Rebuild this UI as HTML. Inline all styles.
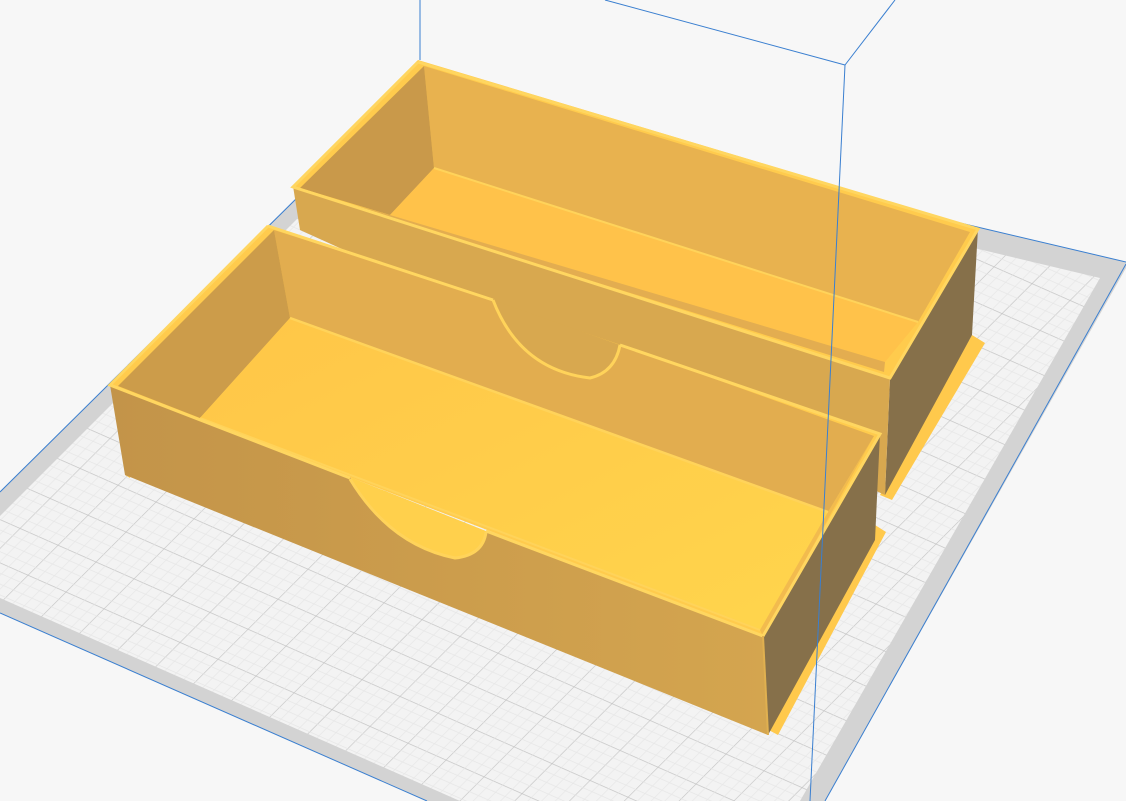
<!DOCTYPE html>
<html><head><meta charset="utf-8"><style>html,body{margin:0;padding:0;background:#f7f7f7;}svg{display:block}</style></head><body>
<svg width="1126" height="801" viewBox="0 0 1126 801" xmlns="http://www.w3.org/2000/svg">
<defs>
<pattern id="g" width="40" height="40" patternUnits="userSpaceOnUse" patternTransform="matrix(0.95,0.42,-0.75,0.75,0,0)">
<rect width="40" height="40" fill="#f3f3f3"/>
<path d="M0 0H40M0 0V40" stroke="#c4c4c4" stroke-width="1.3" fill="none"/>
<path d="M0 10H40M0 20H40M0 30H40M10 0V40M20 0V40M30 0V40" stroke="#e6e6e6" stroke-width="0.6" fill="none"/>
</pattern>
<linearGradient id="ff" x1="0" y1="0" x2="1" y2="0"><stop offset="0" stop-color="#c39449"/><stop offset="1" stop-color="#d4a54f"/></linearGradient>
<linearGradient id="fl" x1="0" y1="0" x2="1" y2="1"><stop offset="0" stop-color="#ffc648"/><stop offset="1" stop-color="#ffd54c"/></linearGradient>
</defs>
<rect width="1126" height="801" fill="#f7f7f7"/>
<polygon points="404,92 1126,262 1126,268 825,801 427,801 0,613 0,492" fill="#d3d3d3"/>
<polygon points="404,112 1100,278 800,801 460,801 0,598 0,516" fill="url(#g)"/>
<polyline points="0,492 404,92 1126,262" fill="none" stroke="#3a7fd0" stroke-width="1"/>
<line x1="1126" y1="264" x2="825" y2="801" stroke="#3a7fd0" stroke-width="1"/>
<line x1="0" y1="613" x2="427" y2="801" stroke="#3a7fd0" stroke-width="1"/>
<line x1="420" y1="0" x2="420" y2="60" stroke="#3a7fd0" stroke-width="1"/>
<line x1="605" y1="0" x2="845" y2="65" stroke="#3a7fd0" stroke-width="1"/>
<line x1="895" y1="0" x2="845" y2="65" stroke="#3a7fd0" stroke-width="1"/>

<!-- BACK BOX -->
<polygon points="972,335 985,343 892,500 880,495" fill="#ffc94c"/>
<polygon points="978,228 972,335 885,495 890,378" fill="#86704a"/>
<polygon points="293,186 890,378 885,495 300,230" fill="#d8a84f"/>
<polygon points="418,60 978,228 890,378 293,186" fill="#ffcb4d"/>
<polygon points="424,66 970,232 918,322 434,168" fill="#e8b24f"/>
<polygon points="424,66 434,168 390,215 300,188" fill="#c9994a"/>
<polygon points="434,168 918,322 885,362 390,215" fill="#ffc24a"/>
<polygon points="390,215 885,362 884,372 300,190" fill="#e3ad50"/>
<line x1="434" y1="168" x2="918" y2="322" stroke="#ffd35a" stroke-width="2"/>
<polyline points="418,62 978,229 890,378 293,187 418,62" fill="none" stroke="#ffd660" stroke-width="3"/>

<!-- FRONT BOX -->
<polygon points="875,525 886,532 778,735 765,728" fill="#ffc94c"/>
<polygon points="125,465 132,462 130,478 125,475" fill="#ffc94c"/>
<polygon points="880,433 875,540 768,735 763,636" fill="#86704a"/>
<polygon points="268,225 880,433 763,636 110,385" fill="#ffcb4d"/>
<path d="M274,230 L493,300 Q520,370 590,378 Q615,372 620,345 L874,436 828,512 290,318 Z" fill="#e2ad4f"/>
<path d="M493,300 Q520,370 590,378 Q615,372 620,345 Z" fill="#d8a84f"/>
<polygon points="274,230 290,318 200,418 118,386" fill="#cc9c4a"/>
<polygon points="290,318 828,512 760,630 200,418" fill="url(#fl)"/>
<polygon points="874,436 828,512 760,630 763,636" fill="#f2bb4e"/>
<line x1="290" y1="318" x2="828" y2="512" stroke="#ffd35a" stroke-width="2.5"/>
<line x1="200" y1="418" x2="760" y2="630" stroke="#ffd35a" stroke-width="2"/>
<!-- front outer face -->
<path d="M110,385 L350,477 Q390,545 455,558 Q483,555 486,531 L763,636 768,735 125,475 Z" fill="url(#ff)"/>
<path d="M350,477 Q390,545 455,558 Q483,555 486,531 Z" fill="#ffd04c"/>
<path d="M350,479 Q390,545 455,558 Q483,555 486,532" fill="none" stroke="#ffd35a" stroke-width="3"/>
<path d="M493,300 Q520,370 590,378 Q615,372 620,345" fill="none" stroke="#ffd35a" stroke-width="3"/>
<polyline points="268,226 493,300" fill="none" stroke="#ffd660" stroke-width="3"/>
<polyline points="620,345 880,434 763,636 486,531" fill="none" stroke="#ffd660" stroke-width="3"/>
<polyline points="350,478 110,385 268,226" fill="none" stroke="#ffd660" stroke-width="3"/>
<line x1="763" y1="636" x2="768" y2="735" stroke="#e0b050" stroke-width="2"/>

<line x1="845" y1="65" x2="810" y2="801" stroke="#3a7fd0" stroke-width="1"/>
</svg>
</body></html>
